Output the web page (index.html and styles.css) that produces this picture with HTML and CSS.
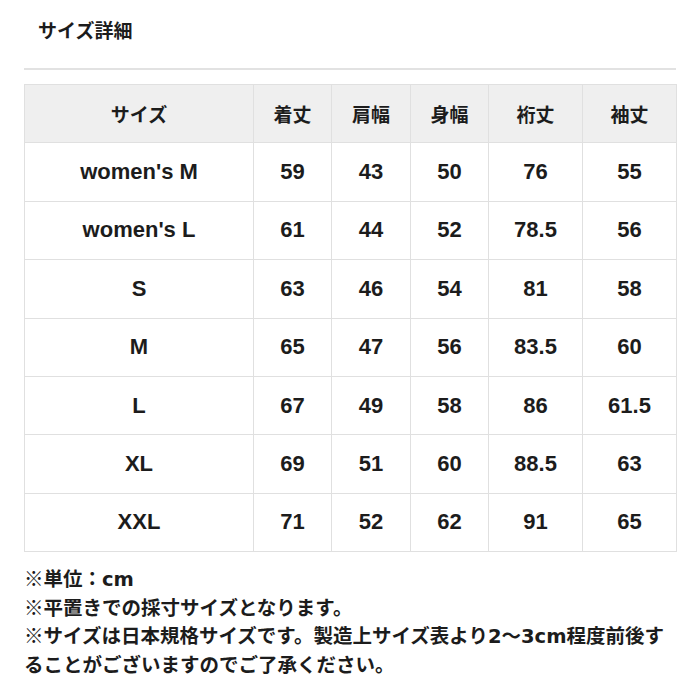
FILE: index.html
```html
<!DOCTYPE html>
<html lang="ja">
<head>
<meta charset="utf-8">
<link rel="stylesheet" href="styles.css">
</head>
<body>
<div class="page">
  <h2 class="title">サイズ詳細</h2>
  <hr class="sep">
  <table class="size-table">
    <colgroup>
      <col class="c-size"><col class="c1"><col class="c2"><col class="c3"><col class="c4"><col class="c5">
    </colgroup>
    <thead>
      <tr><th>サイズ</th><th>着丈</th><th>肩幅</th><th>身幅</th><th>裄丈</th><th>袖丈</th></tr>
    </thead>
    <tbody>
      <tr><td>women's M</td><td>59</td><td>43</td><td>50</td><td>76</td><td>55</td></tr>
      <tr><td>women's L</td><td>61</td><td>44</td><td>52</td><td>78.5</td><td>56</td></tr>
      <tr><td>S</td><td>63</td><td>46</td><td>54</td><td>81</td><td>58</td></tr>
      <tr><td>M</td><td>65</td><td>47</td><td>56</td><td>83.5</td><td>60</td></tr>
      <tr><td>L</td><td>67</td><td>49</td><td>58</td><td>86</td><td>61.5</td></tr>
      <tr><td>XL</td><td>69</td><td>51</td><td>60</td><td>88.5</td><td>63</td></tr>
      <tr><td>XXL</td><td>71</td><td>52</td><td>62</td><td>91</td><td>65</td></tr>
    </tbody>
  </table>
  <div class="notes">
    <p>※単位：<span class="lat">cm</span></p>
    <p>※平置きでの採寸サイズとなります。</p>
    <p>※サイズは日本規格サイズです。製造上サイズ表より<span class="lat">2</span>〜<span class="lat">3cm</span>程度前後することがございますのでご了承ください。</p>
  </div>
</div>
</body>
</html>
```
FILE: styles.css
```css
html, body {
  margin: 0;
  padding: 0;
  background: #fff;
}
body {
  font-family: "Liberation Sans", "Noto Sans CJK JP", sans-serif;
  color: #1c1c1c;
  font-weight: bold;
}
.page {
  padding: 0 24px;
}
.title {
  margin: 0;
  padding: 20px 0 0 14px;
  font-size: 19px;
  line-height: 24px;
  font-weight: bold;
}
.sep {
  margin: 24px 0 0;
  border: 0;
  border-top: 2px solid #e2e2e2;
  height: 0;
}
.size-table {
  margin-top: 14px;
  width: 652px;
  border-collapse: collapse;
  table-layout: fixed;
}
.c-size { width: 229px; }
.c1 { width: 78px; }
.c2 { width: 79px; }
.c3 { width: 78px; }
.c4 { width: 94px; }
.c5 { width: 94px; }
.size-table th,
.size-table td {
  border: 1px solid #e0e0e0;
  text-align: center;
  vertical-align: middle;
  padding: 0;
  height: 57.4px;
}
.size-table th {
  background: #efefef;
  font-size: 19px;
  font-weight: bold;
}
.size-table td {
  font-size: 22px;
  font-weight: bold;
}
.notes {
  margin-top: 12px;
  font-family: "Noto Sans CJK JP", sans-serif;
  font-size: 19.5px;
  line-height: 28.5px;
}
.notes p {
  margin: 0;
}
.lat {
  font-family: "DejaVu Sans", sans-serif;
  font-weight: bold;
  line-height: 1;
}
```
